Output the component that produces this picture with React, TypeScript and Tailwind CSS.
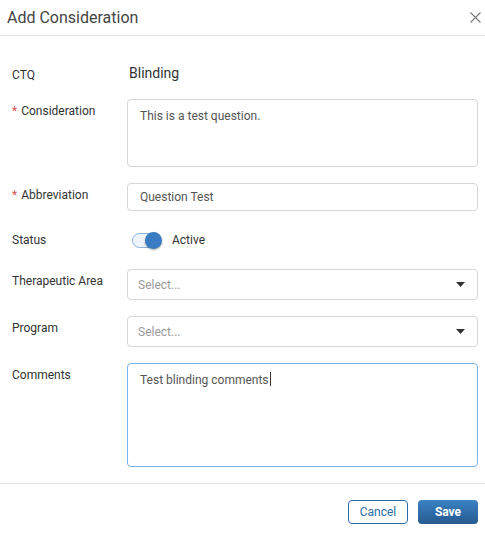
function Caret() {
  return (
    <svg width="9" height="5" viewBox="0 0 9 5" className="shrink-0">
      <path d="M0 0 L9 0 L4.5 5 Z" fill="#333" />
    </svg>
  )
}

function Label({ text, required }: { text: string; required?: boolean }) {
  return (
    <div className="w-[115px] shrink-0 pt-[4px] text-[12px] leading-[16px] text-[#333]">
      {required && <span className="mr-[4px] text-[#d9534f]">*</span>}
      {text}
    </div>
  )
}

export default function App() {
  return (
    <div className="flex h-[537px] w-[485px] flex-col bg-white font-['Roboto',sans-serif]">
      {/* Header */}
      <div className="flex h-[36px] items-center justify-between border-b border-[#e5e5e5] pl-[7px] pr-[2px]">
        <h1 className="text-[16px] text-[#444]">Add Consideration</h1>
        <svg width="11" height="11" viewBox="0 0 11 11" className="mr-[2px]">
          <path d="M0.5 0.5 L10.5 10.5 M10.5 0.5 L0.5 10.5" stroke="#777" strokeWidth="1.1" />
        </svg>
      </div>

      {/* Body */}
      <div className="flex flex-col gap-[16px] border-b border-[#e5e5e5] pb-[16px] pl-[12px] pr-[7px] pt-[27px]">
        <div className="flex h-[20px] items-center">
          <div className="w-[117px] shrink-0 pt-[3px] text-[12px] text-[#333]">CTQ</div>
          <div className="text-[14px] text-[#333]">Blinding</div>
        </div>

        <div className="flex">
          <Label text="Consideration" required />
          <div className="h-[68px] flex-1 rounded-[4px] border border-[#d6d6d6] px-[12px] pt-[8px] text-[12px] leading-[16px] text-[#555]">
            This is a test question.
          </div>
        </div>

        <div className="flex">
          <Label text="Abbreviation" required />
          <div className="flex h-[28px] flex-1 items-center rounded-[4px] border border-[#d6d6d6] px-[12px] text-[12px] text-[#555]">
            Question Test
          </div>
        </div>

        <div className="flex h-[26px] items-center">
          <div className="w-[115px] shrink-0 text-[12px] text-[#333]">Status</div>
          <div className="ml-[5px] flex items-center">
            <div className="relative h-[15px] w-[28px] rounded-full border border-[#8ab4e0] bg-[#eef3f9]">
              <div className="absolute right-[-3px] top-[-2px] h-[17px] w-[17px] rounded-full bg-[#3a7cc3] shadow-[0_1px_2px_rgba(0,0,0,0.35)]" />
            </div>
            <span className="ml-[12px] text-[12px] text-[#333]">Active</span>
          </div>
        </div>

        <div className="flex">
          <Label text="Therapeutic Area" />
          <div className="flex h-[31px] flex-1 items-center justify-between rounded-[4px] border border-[#d6d6d6] pl-[10px] pr-[12px] text-[12px] text-[#999]">
            Select...
            <Caret />
          </div>
        </div>

        <div className="flex">
          <Label text="Program" />
          <div className="flex h-[31px] flex-1 items-center justify-between rounded-[4px] border border-[#d6d6d6] pl-[10px] pr-[12px] text-[12px] text-[#999]">
            Select...
            <Caret />
          </div>
        </div>

        <div className="flex">
          <Label text="Comments" />
          <div className="h-[104px] flex-1 rounded-[4px] border border-[#7db4ef] px-[12px] pt-[6px] text-[12px] leading-[16px] text-[#555]">
            Test blinding comments<span className="ml-[1px] inline-block h-[14px] w-[1px] translate-y-[2px] bg-[#333]" />
          </div>
        </div>
      </div>

      {/* Footer */}
      <div className="flex justify-end gap-[10px] pr-[7px] pt-[16px]">
        <button className="h-[24px] w-[60px] rounded-[4px] border border-[#2e6da4] bg-white text-[12px] text-[#2e6da4]">
          Cancel
        </button>
        <button className="h-[24px] w-[60px] rounded-[4px] bg-gradient-to-b from-[#3b82c4] to-[#265a8f] text-[12px] font-bold text-white">
          Save
        </button>
      </div>
    </div>
  )
}
